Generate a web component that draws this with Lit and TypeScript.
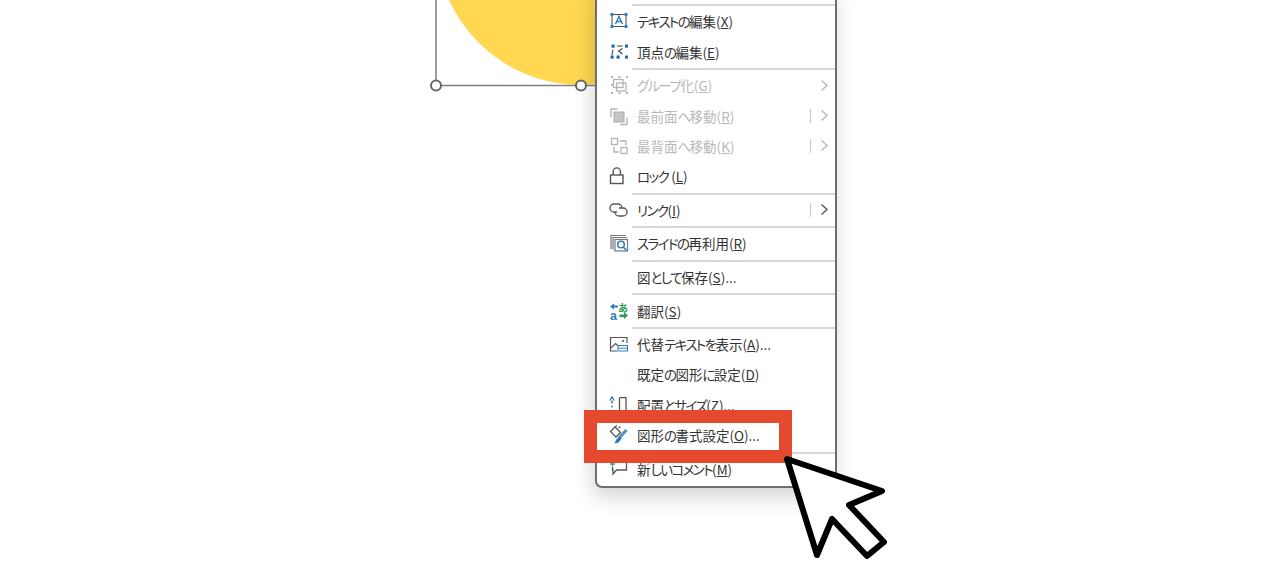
import { LitElement, html, css, svg, nothing } from "lit";
import { customElement } from "lit/decorators.js";

const D = "#b4b4b4";
const B = "#2b7fc0";
const K = "#555";

const icons: Record<string, unknown> = {
  editText: svg`<rect x="4" y="3.500" width="14" height="12" fill="none" stroke="${K}" stroke-width="1.100"/>
    <g fill="${B}"><circle cx="4" cy="3.500" r="1.700"/><circle cx="18" cy="3.500" r="1.700"/><circle cx="4" cy="15.500" r="1.700"/><circle cx="18" cy="15.500" r="1.700"/></g>
    <path d="M7.500 13 L11 5.500 L14.500 13 M8.800 10.600 H13.200" fill="none" stroke="${B}" stroke-width="1.500"/>`,
  editPoints: svg`<g fill="#1f6fb0"><rect x="3.500" y="2.500" width="3.200" height="3.200"/><rect x="17" y="2.500" width="3" height="3.200"/><rect x="2.500" y="13.500" width="3.200" height="3.200"/><rect x="8.500" y="13.500" width="3.200" height="3.200"/><rect x="17" y="13.500" width="3" height="3.200"/></g>
    <path d="M4 13 L5 7.500 M9 4 H14.500 M14.500 6.500 L10.500 9 L14.500 12" fill="none" stroke="#444" stroke-width="1.100"/>`,
  group: svg`<g fill="none" stroke="${D}" stroke-width="1.300"><rect x="5.500" y="4.500" width="9.500" height="8"/><rect x="8.500" y="8" width="9.500" height="8"/></g>
    <g fill="${D}"><rect x="3" y="1" width="2" height="2"/><rect x="10.500" y="1" width="2" height="2"/><rect x="18" y="1" width="2" height="2"/><rect x="3" y="9" width="2" height="2"/><rect x="3" y="17" width="2" height="2"/><rect x="10.500" y="17" width="2" height="2"/><rect x="18" y="17" width="2" height="2"/></g>`,
  front: svg`<path d="M3 11 V3 H9.500 M19 11.500 V18.500 H12" fill="none" stroke="${D}" stroke-width="1.400"/>
    <rect x="6" y="6" width="10" height="10" fill="#c6c6c6" stroke="#aaa"/>`,
  back: svg`<g fill="none" stroke="${D}" stroke-width="1.300"><rect x="3.500" y="2.500" width="6" height="6"/><rect x="13" y="11.500" width="6" height="6"/><path d="M11.500 5 H18 V9.500 M6 10.500 V16 H11"/></g>`,
  lock: svg`<rect x="2.500" y="9" width="12.500" height="8.500" fill="none" stroke="${K}" stroke-width="1.400"/>
    <path d="M5.200 9 V5.500 a3.600 3.600 0 0 1 7.200 0 V9" fill="none" stroke="${K}" stroke-width="1.400"/>`,
  link: svg`<g fill="none" stroke="${K}" stroke-width="1.300"><path d="M9 12 H6 a4 4 0 0 1 0 -8 H10 a4 4 0 0 1 4 4"/><path d="M11 8 H15 a4 4 0 0 1 0 8 H11 a4 4 0 0 1 -4 -4"/></g>`,
  reuse: svg`<g fill="none" stroke="#777" stroke-width="1.200"><path d="M3 16 V2.500 H18"/><path d="M5 16.500 V4.500 H19"/><rect x="7" y="6.500" width="12.500" height="11.500"/></g>
    <circle cx="13" cy="11.500" r="3.300" fill="#fff" stroke="${B}" stroke-width="1.500"/><path d="M15.300 14 L18.500 17.500" stroke="${B}" stroke-width="1.700"/>`,
  translate: svg`<path d="M2 5.500 L6 2.500 V4.500 H10 V6.500 H6 V8.500 Z" fill="${B}"/>
    <text x="2" y="18.500" font-size="12.500" font-family="Liberation Sans" font-weight="700" fill="${B}">a</text>
    <text x="10" y="10.500" font-size="10" font-family="Noto Sans CJK JP" font-weight="700" fill="#2d9a58">あ</text>
    <path d="M20 14.500 L16 18 V16 H11.500 V13.500 H16 V11 Z" fill="#2d9a58"/>`,
  alt: svg`<path d="M9 17 H2.500 V3.500 H19 V9" fill="none" stroke="${K}" stroke-width="1.200"/>
    <path d="M3 14 L7.500 9.500 L11.500 13" fill="none" stroke="${K}" stroke-width="1.200"/><circle cx="15" cy="7" r="1.100" fill="${K}"/>
    <rect x="10" y="11.500" width="9.500" height="5.500" fill="#fff" stroke="${B}" stroke-width="1"/><path d="M10 14.200 H19.500" stroke="${B}" stroke-width="1"/>`,
  size: svg`<path d="M4 19 V14.500 M4 12.500 V10.500 M4 8.500 V3.500" stroke="#1f6fb0" stroke-width="1.300" stroke-dasharray="3 1.500"/>
    <path d="M1.800 5.500 L4 2 L6.200 5.500" fill="none" stroke="#1f6fb0" stroke-width="1.200"/>
    <path d="M11.500 2.700 H18 V19 M11.500 2.700 V19" fill="none" stroke="${K}" stroke-width="1.300"/>`,
  format: svg`<path d="M2.500 6.500 L7 2 L12.500 7.500 L8 12 Z" fill="none" stroke="${K}" stroke-width="1.300"/>
    <path d="M7 2 L9 0.500 M10.500 3 L12.500 1.500" stroke="${K}" stroke-width="1.100"/>
    <path d="M18.500 5 L11.500 12.500" stroke="#5a93bd" stroke-width="3.200"/>
    <path d="M11.500 11 L13.500 13.500 L10.500 17.500 L6.500 18.500 L8 15 Z" fill="#1f78b8"/>`,
  comment: svg`<path d="M18.500 0 V11 H8.500 L5 15 V11 H4.500 V8" fill="none" stroke="${K}" stroke-width="1.300"/>
    <path d="M4.500 2 V7.500 M2 5 H7" stroke="#3aa35f" stroke-width="1.300"/>`,
};

interface Item {
  label: string;
  key: string;
  after?: string;
  icon?: string;
  disabled?: boolean;
  sub?: "plain" | "split";
  sep?: boolean;
}

const items: Item[] = [
  { label: "テキストの編集(", key: "X", after: ")", icon: "editText" },
  { label: "頂点の編集(", key: "E", after: ")", icon: "editPoints", sep: true },
  { label: "グループ化(", key: "G", after: ")", icon: "group", disabled: true, sub: "plain" },
  { label: "最前面へ移動(", key: "R", after: ")", icon: "front", disabled: true, sub: "split" },
  { label: "最背面へ移動(", key: "K", after: ")", icon: "back", disabled: true, sub: "split" },
  { label: "ロック (", key: "L", after: ")", icon: "lock", sep: true },
  { label: "リンク(", key: "I", after: ")", icon: "link", sub: "split", sep: true },
  { label: "スライドの再利用(", key: "R", after: ")", icon: "reuse", sep: true },
  { label: "図として保存(", key: "S", after: ")...", sep: true },
  { label: "翻訳(", key: "S", after: ")", icon: "translate", sep: true },
  { label: "代替テキストを表示(", key: "A", after: ")...", icon: "alt" },
  { label: "既定の図形に設定(", key: "D", after: ")" },
  { label: "配置とサイズ(", key: "Z", after: ")...", icon: "size" },
  { label: "図形の書式設定(", key: "O", after: ")...", icon: "format", sep: true },
  { label: "新しいコメント(", key: "M", after: ")", icon: "comment" },
];

const kanaRuns = (s: string) =>
  s.split(/([\u3040-\u30ff]+)/).map((part) =>
    /^[\u3040-\u30ff]/.test(part) ? html`<span class="kana">${part}</span>` : part
  );

@customElement("app-root")
export class AppRoot extends LitElement {
  static styles = css`
    :host {
      display: block;
      width: 1280px;
      height: 567px;
      background: #fff;
    }
    .stage {
      position: relative;
      width: 1280px;
      height: 567px;
      overflow: hidden;
      background: #fff;
      font-family: "Noto Sans CJK JP", "Noto Sans", sans-serif;
    }
    .canvas {
      position: absolute;
      inset: 0;
    }
    .menu {
      position: absolute;
      left: 595px;
      top: -12px;
      width: 238px;
      padding-top: 13px;
      padding-bottom: 2px;
      background: #fff;
      border: 2px solid #6e6e6e;
      border-radius: 0 0 7px 7px;
      box-shadow: -2px 9px 20px rgba(0, 0, 0, 0.17);
    }
    .sep {
      height: 2px;
      margin: 1.3px 0 0 35px;
      background: #d6d6d6;
    }
    .item {
      display: flex;
      align-items: center;
      height: 30.3px;
      color: #333;
      font-size: 13.5px;
      font-feature-settings: "palt";
      white-space: nowrap;
    }
    .item.disabled {
      color: #b8b8b8;
    }
    .kana {
      letter-spacing: -1.6px;
    }
    .ico {
      flex: none;
      width: 20px;
      height: 20px;
      margin-left: 11px;
      margin-right: 9px;
      overflow: visible;
    }
    .label {
      flex: 1;
    }
    .pipe {
      width: 1px;
      height: 14px;
      background: #c8c8c8;
      margin-right: 9px;
    }
    .chev {
      flex: none;
      width: 9px;
      height: 13px;
      margin-right: 6px;
    }
    .mark {
      position: absolute;
      left: 584px;
      top: 410px;
      width: 182px;
      height: 27px;
      border: 13px solid #e64a2e;
    }
    .cursor {
      position: absolute;
      inset: 0;
      pointer-events: none;
    }
  `;

  private row(it: Item) {
    const chevColor = it.disabled ? "#b8b8b8" : "#555";
    return html`
      <div class="item ${it.disabled ? "disabled" : ""}">
        <svg class="ico" viewBox="0 0 20 20">${it.icon ? icons[it.icon] : nothing}</svg>
        <span class="label">${kanaRuns(it.label)}<u>${it.key}</u>${it.after}</span>
        ${it.sub === "split" ? html`<span class="pipe"></span>` : nothing}
        ${it.sub
          ? html`<svg class="chev" viewBox="0 0 9 13"><path d="M1.500 1.500 L7 6.500 L1.500 11.500" fill="none" stroke="${chevColor}" stroke-width="1.400"/></svg>`
          : nothing}
      </div>
      ${it.sep ? html`<div class="sep"></div>` : nothing}
    `;
  }

  render() {
    return html`
      <div class="stage">
        <svg class="canvas" viewBox="0 0 1280 567">
          <circle cx="581" cy="-60" r="145" fill="#ffd750"/>
          <path d="M436 0 V85.500 H726" fill="none" stroke="#7f7f7f" stroke-width="1.500"/>
          <circle cx="436" cy="85.500" r="5" fill="#fff" stroke="#666" stroke-width="2"/>
          <circle cx="581" cy="85.500" r="5" fill="#fff" stroke="#666" stroke-width="2"/>
        </svg>
        <div class="menu">
          <div class="sep"></div>
          ${items.map((it) => this.row(it))}
        </div>
        <div class="mark"></div>
        <svg class="cursor" viewBox="0 0 1280 567">
          <path d="M787 459 L882 491 L849 505 L884 542 L867 556 L832 519 L817 555 Z" fill="#fff" stroke="#000" stroke-width="6" stroke-linejoin="round"/>
        </svg>
      </div>
    `;
  }
}
